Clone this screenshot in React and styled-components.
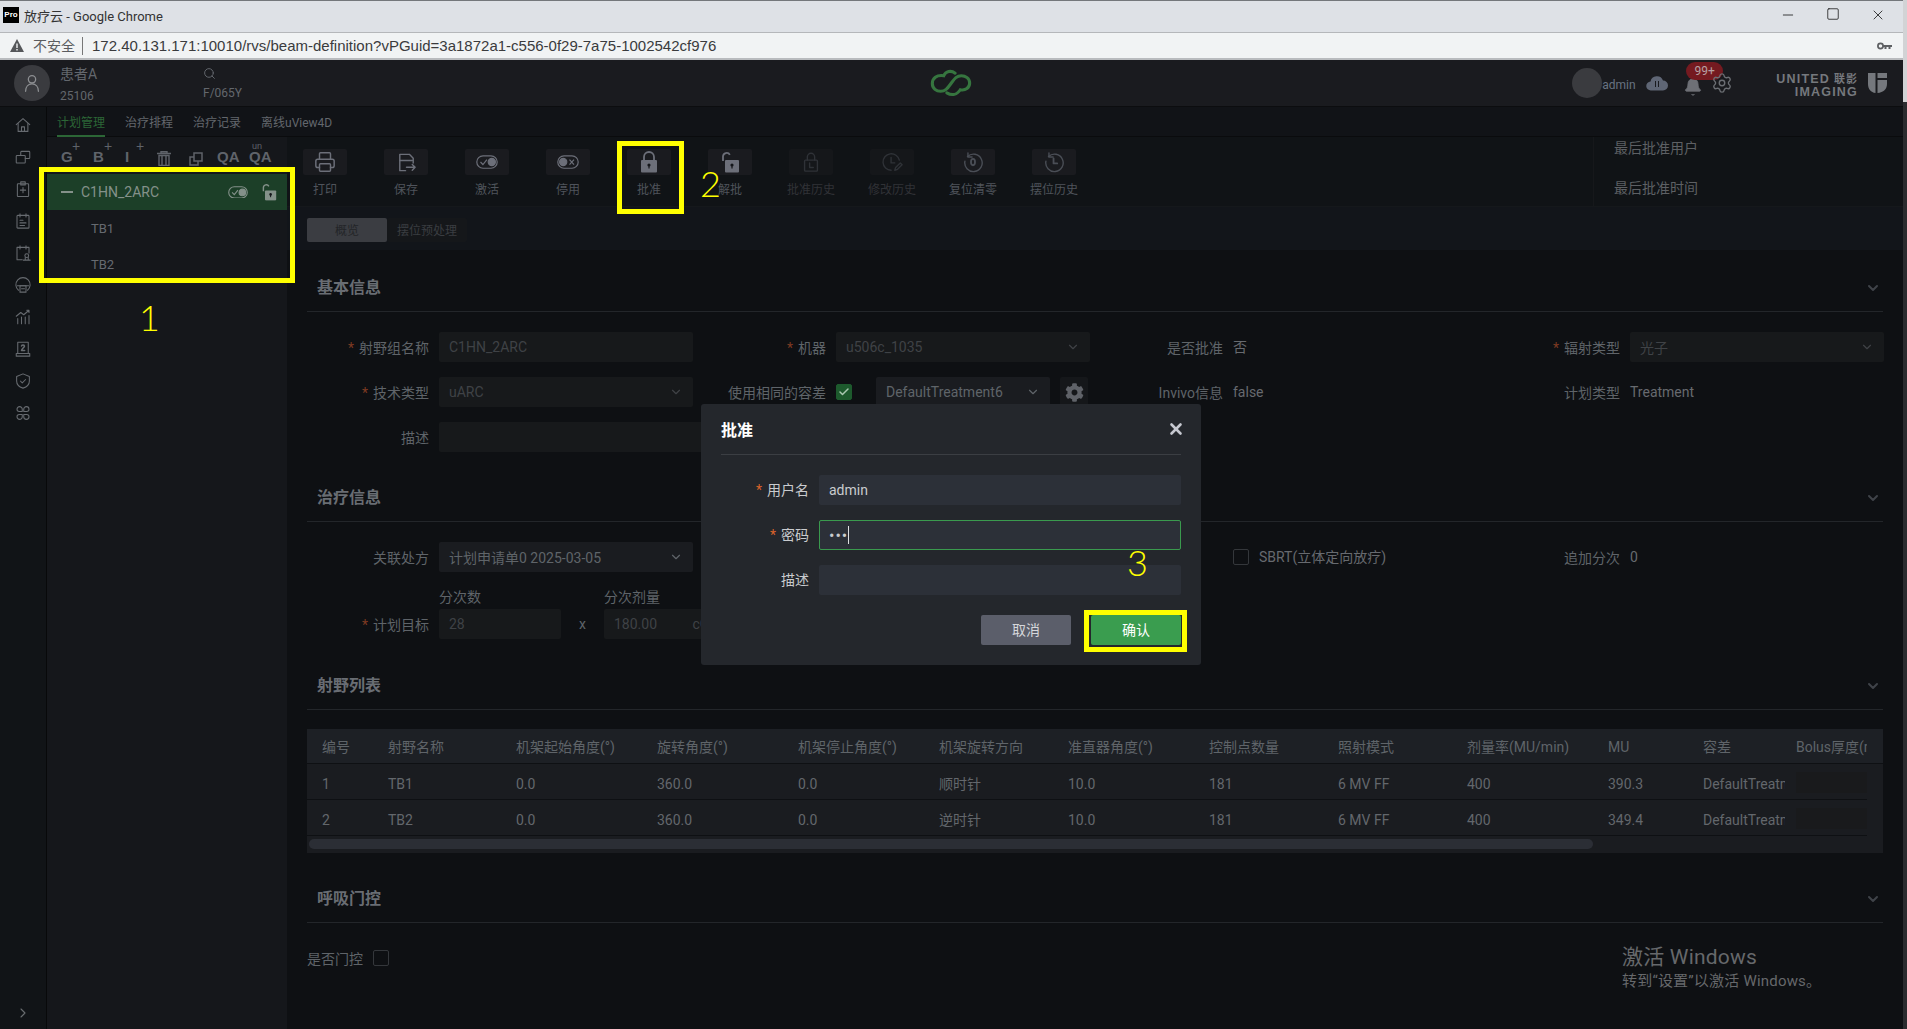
import styled, { createGlobalStyle } from "styled-components";
import { Printer, Search, Minus, Square, X, ChevronDown, ChevronRight, Check, Settings, Bell } from "lucide-react";
import { FaCog } from "react-icons/fa";

const GlobalStyle = createGlobalStyle`
  html, body { margin: 0; padding: 0; background: #0e1013; overflow: hidden; }
  * { box-sizing: border-box; }
  body { font-family: Roboto, "Noto Sans CJK SC", sans-serif; font-size: 14px; }
`;

const Page = styled.div`
  position: relative;
  width: 1907px;
  height: 1029px;
  display: flex;
  overflow: hidden;
`;

const Win = styled.div`
  width: 1903px;
  display: flex;
  flex-direction: column;
`;

const EdgeStrip = styled.div`
  width: 4px;
  background: linear-gradient(#d2d3d5 0 102px, #2b2c2f 102px);
`;

/* browser chrome */
const TitleBar = styled.div`
  height: 32px;
  flex: none;
  background: #dee1e6;
  border-top: 1px solid #74777b;
  display: flex;
  align-items: center;
  padding: 0 17px 3px 3px;
  font-size: 13px;
  color: #333;
`;

const Favicon = styled.span`
  width: 16px;
  height: 16px;
  background: #000;
  color: #fff;
  font: bold 8px/16px "Liberation Sans", sans-serif;
  text-align: center;
  margin-right: 5px;
`;

const WinButtons = styled.div`
  margin-left: auto;
  display: flex;
  gap: 30px;
  color: #111;
`;

const AddressBar = styled.div`
  height: 28px;
  flex: none;
  background: #f1f3f4;
  border-top: 1px solid #b5b7ba;
  border-bottom: 2px solid #b9bbbe;
  display: flex;
  align-items: center;
  padding: 0 11px 0 10px;
  color: #5a5c60;
  font-size: 14px;
`;

const NotSecure = styled.span`
  margin-left: 9px;
  padding-right: 7px;
  border-right: 1px solid #777;
  line-height: 18px;
  font-size: 14px;
`;

const Url = styled.span`
  margin-left: 9px;
  color: #3a3b3d;
  font-family: "Liberation Sans", sans-serif;
  font-size: 15px;
`;

const KeyIcon = styled.svg`
  margin-left: auto;
`;

/* app header */
const AppHeader = styled.header`
  position: relative;
  height: 47px;
  flex: none;
  background: #1a1b1f;
  border-bottom: 1px solid #0c0d0f;
  display: flex;
  align-items: center;
  padding: 0 16px 0 14px;
  color: #63676d;
`;

const Avatar = styled.div`
  width: 36px;
  height: 36px;
  border-radius: 50%;
  background: #3a3b3f;
  color: #8d8f92;
  display: flex;
  align-items: center;
  justify-content: center;
`;

const PatientCol = styled.div`
  display: flex;
  flex-direction: column;
  gap: 5px;
  width: ${(p) => p.$w}px;
  margin-left: 10px;
  padding-top: 2px;
  font-size: 12px;
  line-height: 16px;
`;

const PatientName = styled.span`
  font-size: 14px;
  line-height: 18px;
`;

const AppLogo = styled.svg`
  position: absolute;
  left: 930px;
  top: 9px;
`;

const HeaderRight = styled.div`
  margin-left: auto;
  display: flex;
  align-items: center;
`;

const UserDot = styled.div`
  width: 30px;
  height: 30px;
  border-radius: 50%;
  background: #3a3b3f;
`;

const UserName = styled.span`
  color: #687382;
  font-size: 12px;
  margin: 3px 11px 0 0;
  width: 33px;
`;

const BellWrap = styled.div`
  position: relative;
  width: 28px;
  margin-left: 15px;
  height: 30px;
  padding-top: 9px;
  color: #6e7076;
`;

const Badge = styled.span`
  position: absolute;
  left: 3px;
  top: -6px;
  width: 37px;
  height: 18px;
  border-radius: 9px;
  background: #751a20;
  color: #b7a0a2;
  font-size: 12px;
  line-height: 18px;
  text-align: center;
`;

const GearIcon = styled(Settings)`
  color: #6c6f74;
  position: relative;
`;

const Brand = styled.div`
  margin-left: 43px;
  margin-top: 6px;
  display: flex;
  flex-direction: column;
  align-items: flex-end;
  font: bold 12.5px/13px "Liberation Sans", "Noto Sans CJK SC", sans-serif;
  letter-spacing: 1.2px;
  color: #75787d;
`;

const BrandCn = styled.span`
  font-size: 11px;
  letter-spacing: 1px;
  margin-left: 4px;
`;

const BrandMark = styled.svg`
  margin-left: 10px;
`;

/* app body */
const AppBody = styled.div`
  flex: 1;
  display: flex;
  min-height: 0;
`;

const Sidebar = styled.nav`
  width: 47px;
  flex: none;
  background: #111417;
  border-right: 1px solid #08090a;
  display: flex;
  flex-direction: column;
  align-items: center;
  padding-top: 2px;
  color: #676b70;
`;

const SideIcon = styled.div`
  height: 32px;
  display: flex;
  align-items: center;
  justify-content: center;
`;

const SideExpand = styled.div`
  margin-top: auto;
  margin-bottom: 5px;
  color: #6a6d70;
`;

const Workspace = styled.div`
  flex: 1;
  display: flex;
  flex-direction: column;
  min-width: 0;
`;

const TabBar = styled.div`
  height: 30px;
  flex: none;
  background: #111317;
  border-bottom: 1px solid #0a0b0d;
  display: flex;
  gap: 20px;
  padding-left: 10px;
`;

const Tab = styled.div`
  font-size: 12px;
  line-height: 28px;
  padding-top: 2px;
  height: 30px;
  color: ${(p) => (p.$active ? "#2c6636" : "#63676d")};
  border-bottom: 2px solid ${(p) => (p.$active ? "#2c6636" : "transparent")};
`;

const Split = styled.div`
  flex: 1;
  display: flex;
  min-height: 0;
`;

/* plan tree */
const TreePanel = styled.aside`
  width: 240px;
  flex: none;
  background: #15171b;
`;

const TreeTools = styled.div`
  height: 37px;
  display: flex;
  align-items: flex-end;
  padding: 0 0 8px 14px;
  color: #5f636a;
`;

const TreeTool = styled.div`
  position: relative;
  width: ${(p) => p.$w || 32}px;
  font: bold 15px/18px "Liberation Sans", sans-serif;
  height: 20px;
  display: flex;
  align-items: flex-end;
`;

const ToolSup = styled.span`
  position: absolute;
  left: ${(p) => p.$left}px;
  top: ${(p) => p.$top}px;
  font-size: ${(p) => p.$size}px;
  line-height: 10px;
  font-weight: normal;
`;

const TreeGroup = styled.div`
  height: 36px;
  background: #1c3f28;
  display: flex;
  align-items: center;
  padding: 0 8px 0 14px;
  color: #84918a;
`;

const GroupDash = styled.span`
  width: 12px;
  height: 2px;
  background: #84918a;
  margin-right: 8px;
`;

const GroupName = styled.span`
  flex: 1;
`;

const GroupLock = styled.span`
  margin-left: 11px;
  display: flex;
  transform: scale(0.8);
`;

const TreeLeaf = styled.div`
  height: 36px;
  line-height: 38px;
  padding-left: 44px;
  color: #666a70;
  font-size: 13px;
`;

/* main */
const Main = styled.main`
  flex: 1;
  min-width: 0;
  background: #0e1013;
`;

const Toolbar = styled.div`
  height: 70px;
  background: #101316;
  border-bottom: 1px solid #15181b;
  display: flex;
  padding: 12px 0 0 16px;
  gap: 37px;
  position: relative;
`;

const ToolItem = styled.div`
  width: 44px;
  display: flex;
  flex-direction: column;
  align-items: center;
  color: ${(p) => (p.$dim ? "#2f3237" : p.$mid ? "#4a4e56" : "#6c6f79")};
`;

const ToolIconBox = styled.div`
  width: 44px;
  height: 26px;
  background: ${(p) => (p.$dim ? "#15171a" : "#1a1b1f")};
  border-radius: 2px;
  display: flex;
  align-items: center;
  justify-content: center;
`;

const ToolLabel = styled.span`
  white-space: nowrap;
  font-size: 12px;
  line-height: 16px;
  margin-top: 7px;
  color: ${(p) => (p.$dim ? "#303236" : "#4f535b")};
`;

const ApprovalInfo = styled.div`
  position: absolute;
  left: 1306px;
  top: 0;
  bottom: 0;
  padding: 2px 0 0 20px;
  border-left: 1px solid #16181b;
  display: flex;
  flex-direction: column;
  gap: 22px;
  color: #5d6064;
  line-height: 18px;
`;

const SubBand = styled.div`
  height: 43px;
  background: #12151a;
  padding: 11px 20px 0;
  display: flex;
`;

const SubTab = styled.div`
  width: 80px;
  height: 24px;
  font-size: 12px;
  line-height: 26px;
  text-align: center;
  background: ${(p) => (p.$active ? "#3b3d42" : "#15171a")};
  color: ${(p) => (p.$active ? "#232528" : "#3a3d41")};
  border-radius: 2px;
`;

const Content = styled.div`
  padding: 12px 20px 0;
`;

const Section = styled.section`
  margin-bottom: ${(p) => p.$after || 20}px;
`;

const SectionHead = styled.div`
  height: 50px;
  padding: 3px 2px 0 10px;
  border-bottom: 1px solid #23262a;
  display: flex;
  align-items: center;
  justify-content: space-between;
  color: #3f4349;
`;

const SectionTitle = styled.h3`
  margin: -5px 0 0;
  font-size: 16px;
  font-weight: bold;
  color: #696d73;
`;

const FormGrid = styled.div`
  display: grid;
  grid-template-columns: repeat(4, 386px);
  column-gap: 11px;
  row-gap: 15px;
  margin-top: 20px;
`;

const Field = styled.div`
  display: flex;
  align-items: flex-end;
  grid-column: span ${(p) => p.$span || 1};
  min-height: 30px;
`;

const Label = styled.label`
  width: 122px;
  flex: none;
  margin-right: 10px;
  height: 30px;
  line-height: 32px;
  text-align: right;
  white-space: nowrap;
  color: #5f6469;
`;

const Star = styled.span`
  color: #7e3a22;
  margin-right: 5px;
`;

const Control = styled.div`
  width: ${(p) => p.$w || 254}px;
  flex: ${(p) => (p.$grow ? 1 : "none")};
  height: 30px;
  padding: 0 10px;
  background: ${(p) => (p.$off ? "#17191b" : "#1a1c20")};
  color: ${(p) => (p.$off ? "#3f4246" : "#5f6469")};
  border-radius: 2px;
  display: flex;
  align-items: center;
  justify-content: space-between;
  white-space: nowrap;
`;

const Value = styled.span`
  display: block;
  height: 30px;
  line-height: 30px;
  color: #676a6f;
`;

const Box = styled.span`
  width: 16px;
  height: 16px;
  flex: none;
  border-radius: 2px;
  border: 1px solid #34373b;
  display: inline-flex;
  align-items: center;
  justify-content: center;
  background: ${(p) => (p.$on ? "#1d5a2d" : "transparent")};
  border-color: ${(p) => (p.$on ? "#1d5a2d" : "#34373b")};
  margin-right: ${(p) => (p.$on ? 24 : 0)}px;
  color: #a9c8b0;
`;

const InlineRow = styled.div`
  display: flex;
  align-items: center;
  height: 30px;
  gap: 10px;
`;

const ToleranceRow = styled.div`
  display: flex;
  align-items: center;
  height: 30px;
`;

const GearBtn = styled.div`
  width: 28px;
  height: 30px;
  margin-left: 10px;
  background: #15171a;
  border-radius: 2px;
  color: #5f6268;
  display: flex;
  align-items: center;
  justify-content: center;
`;

const Stack = styled.div`
  display: flex;
  flex: none;
  flex-direction: column;
`;

const StackLabel = styled.span`
  height: 22px;
  line-height: 20px;
  color: #5f6469;
`;

const Times = styled.span`
  width: 43px;
  flex: none;
  height: 30px;
  line-height: 30px;
  text-align: center;
  color: #5f6469;
`;

/* beams table */
const TableWrap = styled.div`
  margin-top: 19px;
  height: 124px;
  background: #1a1c20;
  overflow: hidden;
`;

const HeadRow = styled.div`
  height: 35px;
  display: grid;
  grid-template-columns: ${(p) => p.$cols};
  background: #1d2025;
  border-bottom: 1px solid #0e1013;
  line-height: 37px;
  color: #5f6469;
`;

const BodyRow = styled.div`
  width: 1560px;
  height: 36px;
  display: grid;
  grid-template-columns: ${(p) => p.$cols};
  border-bottom: 1px solid #0e1013;
  line-height: 40px;
  color: #63676c;
`;

const Cell = styled.div`
  padding-left: ${(p) => (p.$tight ? 11 : 15)}px;
  white-space: nowrap;
  overflow: hidden;
`;

const BolusInput = styled.div`
  height: 21px;
  margin-top: 8px;
  background: #191a1c;
`;

const ScrollTrack = styled.div`
  padding: 3px 2px;
`;

const ScrollThumb = styled.div`
  width: 1284px;
  height: 10px;
  border-radius: 5px;
  background: #2b2e35;
`;

const GateRow = styled.div`
  display: flex;
  align-items: center;
  gap: 10px;
  margin-top: 27px;
  color: #5f6469;
  height: 16px;
`;

const Watermark = styled.div`
  position: absolute;
  left: 1622px;
  top: 943px;
  color: #66686b;
  font-size: 15px;
  line-height: 20px;
  letter-spacing: 0.2px;
`;

const WatermarkBig = styled.div`
  font-size: 21px;
  line-height: 28px;
`;

/* dialog */
const Dialog = styled.div`
  position: absolute;
  left: 701px;
  top: 404px;
  width: 500px;
  height: 261px;
  background: #24272c;
  border-radius: 3px;
  padding: 0 20px;
  display: flex;
  flex-direction: column;
`;

const DialogHead = styled.div`
  height: 51px;
  flex: none;
  border-bottom: 1px solid #3b3e43;
  display: flex;
  align-items: center;
  justify-content: space-between;
  padding-bottom: 1px;
  color: #c6c8d0;
`;

const DialogTitle = styled.h2`
  margin: 0;
  color: #fff;
  font-size: 16px;
  font-weight: bold;
`;

const CloseIcon = styled(X)`
  margin-right: -4px;
  margin-top: 1px;
`;

const DialogForm = styled.div`
  margin-top: 20px;
  display: flex;
  flex-direction: column;
  gap: 15px;
`;

const DialogRow = styled.div`
  display: flex;
  align-items: center;
  height: 30px;
`;

const DialogLabel = styled.label`
  width: 88px;
  margin-right: 10px;
  margin-bottom: 2px;
  flex: none;
  text-align: right;
  color: #c9cbce;
`;

const DialogStar = styled.span`
  color: #d9622b;
  margin-right: 5px;
`;

const DialogInput = styled.div`
  flex: 1;
  height: 30px;
  background: #2c3038;
  border-radius: 2px;
  padding: 0 10px 0 ${(p) => (p.$focus ? 9 : 10)}px;
  color: #c9cbce;
  border: ${(p) => (p.$focus ? "1px solid #3a9a4e" : "none")};
  display: flex;
  align-items: center;
  font-size: 14px;
`;

const Dots = styled.span`
  font-size: 16px;
  letter-spacing: 1px;
`;

const Caret = styled.span`
  width: 1px;
  height: 18px;
  background: #dfe0e2;
`;

const DialogFoot = styled.div`
  margin-top: 20px;
  display: flex;
  justify-content: flex-end;
  gap: 20px;
`;

const Btn = styled.button`
  width: 90px;
  height: 30px;
  border: none;
  padding: 0 0 2px;
  border-radius: 2px;
  font: 14px Roboto, "Noto Sans CJK SC", sans-serif;
  color: ${(p) => (p.$primary ? "#fff" : "#d6d7db")};
  background: ${(p) => (p.$primary ? "#3a9d4f" : "#5b5e6a")};
`;

/* yellow notes drawn over the shot */
const NoteBox = styled.div`
  position: absolute;
  left: ${(p) => p.$x}px;
  top: ${(p) => p.$y}px;
  width: ${(p) => p.$w}px;
  height: ${(p) => p.$h}px;
  border: 5px solid #ffff00;
`;

const NoteNum = styled.span`
  position: absolute;
  left: ${(p) => p.$x}px;
  top: ${(p) => p.$y}px;
  color: #ffff00;
  font: 300 36px/40px Lato, sans-serif;
`;

const Ico = ({ size = 20, w = 1.5, children }) => (
  <svg width={size} height={size} viewBox="0 0 24 24" fill="none" stroke="currentColor" strokeWidth={w} strokeLinecap="round" strokeLinejoin="round">
    {children}
  </svg>
);

const sideIcons = [
  <><path d="M3 11.5 12 3.5l9 8" /><path d="M5.5 10v10.5h13V10" /><path d="M10 20.5v-6h4v6" /></>,
  <><rect x="3" y="10" width="12" height="10" rx="1" /><path d="M9 10V5.5a1 1 0 0 1 1-1h10a1 1 0 0 1 1 1V13a1 1 0 0 1-1 1h-5" /></>,
  <><rect x="4.5" y="5" width="15" height="17" rx="1" /><rect x="9" y="2.5" width="6" height="4" /><path d="M12 10v7M8.5 13.5h7" /></>,
  <><rect x="4" y="4.5" width="16" height="17" rx="1" /><path d="M8 2.5v4M16 2.5v4M8 11h4M8 14.5h8M8 18h6" /></>,
  <><path d="M11 21H4V4.5h16V12" /><path d="M8 2.5v4M16 2.5v4" /><circle cx="17" cy="15.5" r="2.5" /><path d="M12.5 21.5h9M15 18v3.5M19 18v3.5" /></>,
  <><path d="M6 19a9.5 9.5 0 1 1 12 0" /><path d="M4.5 13h15" /><rect x="8" y="13" width="8" height="8.5" /><path d="M10 17h4" /></>,
  <><path d="M5 21v-7M10 21v-9M15 21v-9M20 21V10" /><path d="M3 11l6-5 4 3 7-6M17 3h3v3" /></>,
  <><rect x="5" y="3" width="14" height="15" /><path d="M3 21.5h18V18H3z" /><path d="M10 8a2.2 2.2 0 0 1 4 0c0 2-4 3.5-4 6h4.2" strokeWidth="2" /></>,
  <><path d="M12 2.5 20.5 6v6c0 5-3.5 8-8.5 9.5C7 20 3.5 17 3.5 12V6z" /><path d="M8.5 12l2.5 2.5 4.5-4.5" /></>,
  <><path d="M11 10V7a3.5 3.5 0 1 0-7 0 3 3 0 0 0 3 3zM13 10V7a3.5 3.5 0 1 1 7 0 3 3 0 0 1-3 3zM11 14v3a3.5 3.5 0 1 1-7 0 3 3 0 0 1 3-3zM13 14v3a3.5 3.5 0 1 0 7 0 3 3 0 0 0-3-3z" /></>,
];

const LockSolid = ({ open }) => (
  <svg width="20" height="22" viewBox="0 0 20 22" fill="none">
    <path d={open ? "M3 10V5.5a3.6 3.6 0 0 1 6.8-1.6" : "M5 10V6a5 5 0 0 1 10 0v4"} stroke="currentColor" strokeWidth="1.8" />
    <rect x={open ? 5 : 2} y="9" width={open ? 14 : 16} height="12.5" rx="1" fill="currentColor" />
    <circle cx={open ? 12 : 10} cy="14" r="1.6" fill="#14161a" />
    <rect x={open ? 11.4 : 9.4} y="14" width="1.2" height="3.5" fill="#14161a" />
  </svg>
);

const ToggleIcon = ({ on, size = 22 }) => (
  <svg width={size} height={size * 0.64} viewBox="0 0 22 14" fill="none" stroke="currentColor" strokeWidth="1.2">
    <rect x="0.8" y="0.8" width="20.4" height="12.4" rx="6.2" />
    {on ? (
      <>
        <path d="M4.5 7l2.4 2.5 4-5" />
        <circle cx="15.8" cy="7" r="3.6" fill="currentColor" />
      </>
    ) : (
      <>
        <circle cx="6.2" cy="7" r="3.6" fill="currentColor" />
        <path d="M12.5 4.5l4.5 5M17 4.5l-4.5 5" />
      </>
    )}
  </svg>
);

const toolItems = [
  { label: "打印", icon: <Printer size={22} strokeWidth={1.6} /> },
  { label: "保存", icon: <Ico size={23}><path d="M11 20.5H5V3.5h10l4 4v5" /><path d="M5 10h13" /><path d="M12 17h9M18 14l3 3-3 3" /></Ico> },
  { label: "激活", icon: <ToggleIcon on /> },
  { label: "停用", icon: <ToggleIcon /> },
  { label: "批准", icon: <LockSolid /> },
  { label: "解批", icon: <LockSolid open /> },
  { label: "批准历史", dim: true, icon: <Ico size={22}><rect x="5" y="10" width="14" height="12" rx="1" /><path d="M8 10V6.5a4 4 0 0 1 8 0V10M10.5 13v5h4" /></Ico> },
  { label: "修改历史", dim: true, icon: <Ico size={22}><path d="M11 21a9 9 0 1 1 9-11" /><path d="M11 7v6h4" /><path d="M15 21l1-3 5-5 2 2-5 5z" /></Ico> },
  { label: "复位清零", mid: true, icon: <Ico size={22}><path d="M6 6a9.5 9.5 0 1 1-2.8 5" /><path d="M6.5 2v4.5H11" /><ellipse cx="12" cy="12" rx="2.2" ry="3.5" strokeWidth="2" /></Ico> },
  { label: "摆位历史", mid: true, icon: <Ico size={22}><path d="M6 6a9.5 9.5 0 1 1-2.8 5" /><path d="M6.5 2v4.5H11" /><path d="M11.5 8v5.5h4" strokeWidth="2" /></Ico> },
];

const cols = "66px 128px 141px 141px 141px 129px 141px 129px 129px 141px 95px 97px 82px";
const heads = ["编号", "射野名称", "机架起始角度(°)", "旋转角度(°)", "机架停止角度(°)", "机架旋转方向", "准直器角度(°)", "控制点数量", "照射模式", "剂量率(MU/min)", "MU", "容差"];
const beams = [
  ["1", "TB1", "0.0", "360.0", "0.0", "顺时针", "10.0", "181", "6 MV FF", "400", "390.3", "DefaultTreatment6"],
  ["2", "TB2", "0.0", "360.0", "0.0", "逆时针", "10.0", "181", "6 MV FF", "400", "349.4", "DefaultTreatment6"],
];

const Chevron = () => <ChevronDown size={14} strokeWidth={2} />;

const SectionHeader = ({ title }) => (
  <SectionHead>
    <SectionTitle>{title}</SectionTitle>
    <ChevronDown size={16} strokeWidth={3} />
  </SectionHead>
);

export default function App() {
  return (
    <Page>
      <GlobalStyle />
      <Win>
        <TitleBar>
          <Favicon>Pro</Favicon>
          放疗云 - Google Chrome
          <WinButtons>
            <Minus size={16} strokeWidth={1.2} />
            <Square size={14} strokeWidth={1.3} />
            <X size={16} strokeWidth={1.2} />
          </WinButtons>
        </TitleBar>
        <AddressBar>
          <svg width="14" height="13" viewBox="0 0 14 13"><path d="M7 0l7 13H0z" fill="#55575a" /><path d="M6.3 4.5h1.4v4.5H6.3zM6.3 10h1.4v1.4H6.3z" fill="#f1f3f4" /></svg>
          <NotSecure>不安全</NotSecure>
          <Url>172.40.131.171:10010/rvs/beam-definition?vPGuid=3a1872a1-c556-0f29-7a75-1002542cf976</Url>
          <KeyIcon width="15" height="8" viewBox="0 0 15 8"><circle cx="3.5" cy="4" r="2.6" fill="none" stroke="#5d5f62" strokeWidth="1.7" /><path d="M6 3h9v2h-1.5v2h-2V5H9.500v2h-2V5H6z" fill="#5d5f62" /></KeyIcon>
        </AddressBar>
        <AppHeader>
          <Avatar>
            <Ico size={22} w={1.4}><circle cx="12" cy="8" r="4" /><path d="M5 21c0-5 3-8 7-8s7 3 7 8" /></Ico>
          </Avatar>
          <PatientCol $w={133}>
            <PatientName>患者A</PatientName>
            <span>25106</span>
          </PatientCol>
          <PatientCol $w={60}>
            <Search size={13} strokeWidth={1.8} />
            <span>F/065Y</span>
          </PatientCol>
          <AppLogo width="42" height="28" viewBox="0 0 40 27" fill="none" stroke="#36753f" strokeWidth="3" strokeLinecap="round">
            <path d="M24 4C20 1 15 2 13 6.500C6 5.500 2 9 2 14C2 19 6 21.500 10 21.500C15 21.500 17 18 20 14C23 10 25 6.500 30 6.500C34 6.500 38 9 38 13.500C38 18 34 21 29 20C26 24.500 21 26 16 23" />
          </AppLogo>
          <HeaderRight>
            <UserDot />
            <UserName>admin</UserName>
            <svg width="22" height="16" viewBox="0 0 22 16"><path d="M5 15.500a4.500 4.500 0 0 1-.5-9A6.500 6.500 0 0 1 17 5.500a5 5 0 0 1 0 10z" fill="#5f6675" /><path d="M9.500 6v6M12.500 6v6" stroke="#1a1b1f" /></svg>
            <BellWrap>
              <Bell size={20} fill="currentColor" strokeWidth={1} />
              <Badge>99+</Badge>
            </BellWrap>
            <GearIcon size={22} strokeWidth={1.5} />
            <Brand>
              <span>UNITED<BrandCn>联影</BrandCn></span>
              <span>IMAGING</span>
            </Brand>
            <BrandMark width="19" height="20" viewBox="0 0 19 20">
              <path d="M0 0h7.500v20C3 19.500 0 16 0 11zM9.500 0H19v5H9.500zM9.500 7H19v4c0 5-3.500 8.500-9.500 9z" fill="#75787d" />
            </BrandMark>
          </HeaderRight>
        </AppHeader>
        <AppBody>
          <Sidebar>
            {sideIcons.map((icon, i) => (
              <SideIcon key={i}><Ico size={18} w={1.4}>{icon}</Ico></SideIcon>
            ))}
            <SideExpand><ChevronRight size={16} strokeWidth={1.6} /></SideExpand>
          </Sidebar>
          <Workspace>
            <TabBar>
              <Tab $active>计划管理</Tab>
              <Tab>治疗排程</Tab>
              <Tab>治疗记录</Tab>
              <Tab>离线uView4D</Tab>
            </TabBar>
            <Split>
              <TreePanel>
                <TreeTools>
                  <TreeTool>G<ToolSup $left={11} $top={-5} $size={14}>+</ToolSup></TreeTool>
                  <TreeTool>B<ToolSup $left={11} $top={-5} $size={14}>+</ToolSup></TreeTool>
                  <TreeTool>I<ToolSup $left={11} $top={-5} $size={14}>+</ToolSup></TreeTool>
                  <TreeTool><svg width="14" height="15" viewBox="0 0 14 15" fill="none" stroke="currentColor" strokeWidth="1.4"><path d="M0 2.500h14M4 2.500V.8h6v1.700M2 4.500h10v10H2zM5 5v9M9 5v9" /></svg></TreeTool>
                  <TreeTool $w={28}><svg width="14" height="14" viewBox="0 0 14 14" fill="none" stroke="currentColor" strokeWidth="1.5"><path d="M5 1h8v8H5z" /><path d="M5 5H1v8h8V9" /></svg></TreeTool>
                  <TreeTool>QA</TreeTool>
                  <TreeTool>QA<ToolSup $left={3} $top={-5} $size={9}>un</ToolSup></TreeTool>
                </TreeTools>
                <TreeGroup>
                  <GroupDash />
                  <GroupName>C1HN_2ARC</GroupName>
                  <ToggleIcon on size={20} />
                  <GroupLock><LockSolid open /></GroupLock>
                </TreeGroup>
                <TreeLeaf>TB1</TreeLeaf>
                <TreeLeaf>TB2</TreeLeaf>
              </TreePanel>
              <Main>
                <Toolbar>
                  {toolItems.map((t) => (
                    <ToolItem key={t.label} $dim={t.dim} $mid={t.mid}>
                      <ToolIconBox $dim={t.dim}>{t.icon}</ToolIconBox>
                      <ToolLabel $dim={t.dim}>{t.label}</ToolLabel>
                    </ToolItem>
                  ))}
                  <ApprovalInfo>
                    <span>最后批准用户</span>
                    <span>最后批准时间</span>
                  </ApprovalInfo>
                </Toolbar>
                <SubBand>
                  <SubTab $active>概览</SubTab>
                  <SubTab>摆位预处理</SubTab>
                </SubBand>
                <Content>
                  <Section>
                    <SectionHeader title="基本信息" />
                    <FormGrid>
                      <Field><Label><Star>*</Star>射野组名称</Label><Control $off>C1HN_2ARC</Control></Field>
                      <Field><Label><Star>*</Star>机器</Label><Control $off>u506c_1035<Chevron /></Control></Field>
                      <Field><Label>是否批准</Label><Value>否</Value></Field>
                      <Field><Label><Star>*</Star>辐射类型</Label><Control $off>光子<Chevron /></Control></Field>
                      <Field><Label><Star>*</Star>技术类型</Label><Control $off>uARC<Chevron /></Control></Field>
                      <Field>
                        <Label>使用相同的容差</Label>
                        <ToleranceRow>
                          <Box $on><Check size={12} strokeWidth={3} /></Box>
                          <Control $w={174}>DefaultTreatment6<Chevron /></Control>
                          <GearBtn><FaCog size={19} /></GearBtn>
                        </ToleranceRow>
                      </Field>
                      <Field><Label>Invivo信息</Label><Value>false</Value></Field>
                      <Field><Label>计划类型</Label><Value>Treatment</Value></Field>
                      <Field $span={2}><Label>描述</Label><Control $grow $off /></Field>
                    </FormGrid>
                  </Section>
                  <Section $after={21}>
                    <SectionHeader title="治疗信息" />
                    <FormGrid>
                      <Field><Label>关联处方</Label><Control>计划申请单0 2025-03-05<Chevron /></Control></Field>
                      <Field />
                      <Field>
                        <Label />
                        <InlineRow><Box /><Value>SBRT(立体定向放疗)</Value></InlineRow>
                      </Field>
                      <Field><Label>追加分次</Label><Value>0</Value></Field>
                      <Field>
                        <Label><Star>*</Star>计划目标</Label>
                        <Stack>
                          <StackLabel>分次数</StackLabel>
                          <Control $w={122} $off>28</Control>
                        </Stack>
                        <Times>x</Times>
                        <Stack>
                          <StackLabel>分次剂量</StackLabel>
                          <Control $w={122} $off>180.00<span>cGy</span></Control>
                        </Stack>
                      </Field>
                    </FormGrid>
                  </Section>
                  <Section>
                    <SectionHeader title="射野列表" />
                    <TableWrap>
                      <HeadRow $cols={cols}>
                        {heads.map((h) => <Cell key={h}>{h}</Cell>)}
                        <Cell $tight>Bolus厚度(mm)</Cell>
                      </HeadRow>
                      {beams.map((row) => (
                        <BodyRow key={row[0]} $cols={cols}>
                          {row.map((v, i) => <Cell key={i}>{v}</Cell>)}
                          <Cell $tight><BolusInput /></Cell>
                        </BodyRow>
                      ))}
                      <ScrollTrack><ScrollThumb /></ScrollTrack>
                    </TableWrap>
                  </Section>
                  <Section>
                    <SectionHeader title="呼吸门控" />
                    <GateRow>是否门控<Box /></GateRow>
                  </Section>
                </Content>
              </Main>
            </Split>
          </Workspace>
        </AppBody>
      </Win>
      <EdgeStrip />
      <Watermark>
        <WatermarkBig>激活 Windows</WatermarkBig>
        转到“设置”以激活 Windows。
      </Watermark>
      <Dialog>
        <DialogHead>
          <DialogTitle>批准</DialogTitle>
          <CloseIcon size={18} strokeWidth={3.5} />
        </DialogHead>
        <DialogForm>
          <DialogRow><DialogLabel><DialogStar>*</DialogStar>用户名</DialogLabel><DialogInput>admin</DialogInput></DialogRow>
          <DialogRow><DialogLabel><DialogStar>*</DialogStar>密码</DialogLabel><DialogInput $focus><Dots>•••</Dots><Caret /></DialogInput></DialogRow>
          <DialogRow><DialogLabel>描述</DialogLabel><DialogInput /></DialogRow>
        </DialogForm>
        <DialogFoot>
          <Btn>取消</Btn>
          <Btn $primary>确认</Btn>
        </DialogFoot>
      </Dialog>
      <NoteBox $x={39} $y={167} $w={256} $h={116} />
      <NoteBox $x={617} $y={141} $w={67} $h={73} />
      <NoteBox $x={1084} $y={610} $w={103} $h={42} />
      <NoteNum $x={139} $y={297}>1</NoteNum>
      <NoteNum $x={700} $y={163}>2</NoteNum>
      <NoteNum $x={1127} $y={542}>3</NoteNum>
    </Page>
  );
}
